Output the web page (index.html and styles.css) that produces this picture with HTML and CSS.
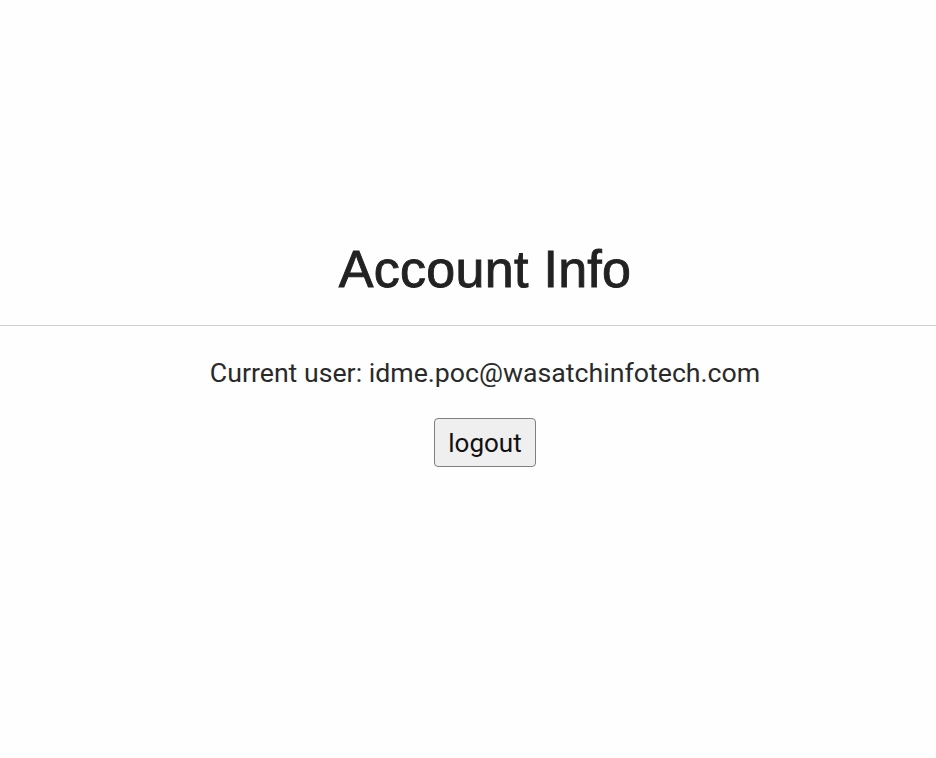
FILE: index.html
```html
<!DOCTYPE html>
<html>
<head>
<meta charset="utf-8">
<link rel="stylesheet" href="styles.css">
</head>
<body>
<div class="page">
  <h1 class="title">Account Info</h1>
  <hr class="divider">
  <p class="user">Current user: idme.poc@wasatchinfotech.com</p>
  <button class="logout">logout</button>
</div>
</body>
</html>
```

FILE: styles.css
```css
html, body {
  margin: 0;
  padding: 0;
  background: #fefefe;
}
.page {
  display: flex;
  flex-direction: column;
  align-items: center;
  padding-top: 238px;
  padding-left: 34px;
}
.title {
  margin: 0;
  font-family: "Liberation Sans", Arial, sans-serif;
  font-weight: 400;
  font-size: 52px;
  line-height: 62px;
  color: #222;
  -webkit-text-stroke: 0.9px #222;
  letter-spacing: 0.3px;
}
.divider {
  align-self: stretch;
  margin: 25px 0 0 -34px;
  border: 0;
  border-top: 1px solid #cfcfcf;
  height: 0;
}
.user {
  margin: 31px 0 0;
  font-family: Roboto, "Noto Sans", sans-serif;
  font-size: 26.7px;
  line-height: 32px;
  color: #2a2a2a;
}
.logout {
  margin-top: 29px;
  width: 102px;
  height: 49px;
  padding: 0;
  font-family: Roboto, "Noto Sans", sans-serif;
  font-size: 26px;
  color: #111;
  background: #efefef;
  border: 1px solid #808080;
  border-radius: 4px;
}
```
